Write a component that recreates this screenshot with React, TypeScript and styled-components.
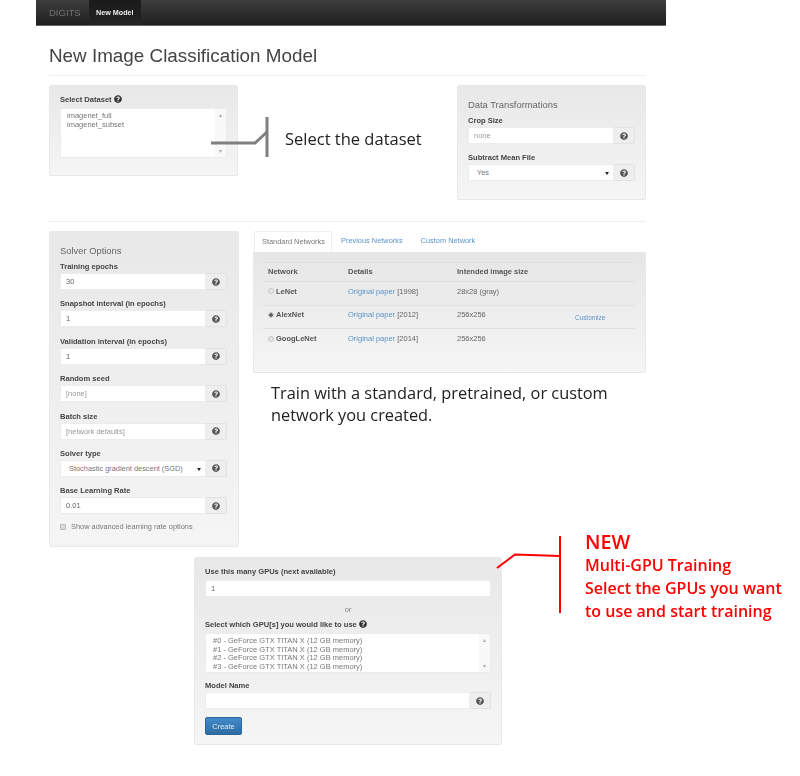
import styled, { createGlobalStyle } from 'styled-components';
import { FaQuestionCircle } from 'react-icons/fa';

const GlobalStyle = createGlobalStyle`
  html, body {
    margin: 0;
    padding: 0;
    background: #fff;
  }
  * {
    box-sizing: border-box;
  }
  body {
    font-family: 'Liberation Sans', Arial, sans-serif;
    font-size: 7.6px;
    color: #555;
  }
`;

const solverFields = [
  { label: 'Training epochs', value: '30' },
  { label: 'Snapshot interval (in epochs)', value: '1' },
  { label: 'Validation interval (in epochs)', value: '1' },
  { label: 'Random seed', placeholder: '[none]' },
  { label: 'Batch size', placeholder: '[network defaults]' },
  { label: 'Solver type', select: 'Stochastic gradient descent (SGD)' },
  { label: 'Base Learning Rate', value: '0.01' },
];

const networks = [
  { name: 'LeNet', year: '[1998]', size: '28x28 (gray)' },
  { name: 'AlexNet', year: '[2012]', size: '256x256', checked: true, customize: true },
  { name: 'GoogLeNet', year: '[2014]', size: '256x256' },
];

const gpus = [0, 1, 2, 3];

type FieldProps = {
  label: string;
  value?: string;
  placeholder?: string;
  select?: string;
};

const Field = ({ label, value, placeholder, select }: FieldProps) => (
  <FieldBox>
    <Label>{label}</Label>
    <InputGroup>
      {select ? (
        <SelectBox>
          {select}
          <Caret />
        </SelectBox>
      ) : (
        <TextInput readOnly defaultValue={value} placeholder={placeholder} />
      )}
      <AddonButton type='button'>
        <FaQuestionCircle />
      </AddonButton>
    </InputGroup>
  </FieldBox>
);

const App = () => {
  return (
    <Page>
      <GlobalStyle />
      <NavBar>
        <Brand>DIGITS</Brand>
        <NavItem>New Model</NavItem>
      </NavBar>
      <Content>
        <PageHeader>
          <h1>New Image Classification Model</h1>
        </PageHeader>

        <TopRow>
          <Well>
            <Label>
              Select Dataset <InlineHelp />
            </Label>
            <ListBox $height={50}>
              <ListText>
                <div>imagenet_full</div>
                <div>imagenet_subset</div>
              </ListText>
              <ScrollTrack>
                <span>▴</span>
                <span>▾</span>
              </ScrollTrack>
            </ListBox>
            <GrayPointer width='60' height='42' viewBox='0 0 60 42'>
              <path d='M0 25 H44 L56 14' />
              <path d='M56 -1 V39' />
            </GrayPointer>
          </Well>
          <DatasetNote>Select the dataset</DatasetNote>
          <Well $tall>
            <WellTitle>Data Transformations</WellTitle>
            <Field label='Crop Size' placeholder='none' />
            <Field label='Subtract Mean File' select='Yes' />
          </Well>
        </TopRow>

        <Divider />

        <MiddleRow>
          <SolverWell>
            <WellTitle>Solver Options</WellTitle>
            {solverFields.map((field) => (
              <Field key={field.label} {...field} />
            ))}
            <CheckRow>
              <CheckBox />
              Show advanced learning rate options
            </CheckRow>
          </SolverWell>

          <NetworkColumn>
            <Tabs>
              <Tab $active>Standard Networks</Tab>
              <Tab>Previous Networks</Tab>
              <Tab>Custom Network</Tab>
            </Tabs>
            <TabPanel>
              <NetworkTable>
                <thead>
                  <tr>
                    <th>Network</th>
                    <th>Details</th>
                    <th>Intended image size</th>
                    <th />
                  </tr>
                </thead>
                <tbody>
                  {networks.map((net) => (
                    <tr key={net.name}>
                      <td>
                        <NetworkName>
                          <Radio $checked={net.checked} />
                          {net.name}
                        </NetworkName>
                      </td>
                      <td>
                        <TextLink>Original paper</TextLink> {net.year}
                      </td>
                      <td>{net.size}</td>
                      <td>{net.customize && <CustomizeLink>Customize</CustomizeLink>}</td>
                    </tr>
                  ))}
                </tbody>
              </NetworkTable>
            </TabPanel>
            <TrainNote>
              Train with a standard, pretrained, or custom
              <br />
              network you created.
            </TrainNote>
          </NetworkColumn>
        </MiddleRow>

        <BottomRow>
          <GpuWell>
            <Label>Use this many GPUs (next available)</Label>
            <GpuInput readOnly defaultValue='1' />
            <OrText>or</OrText>
            <Label>
              Select which GPU[s] you would like to use <InlineHelp />
            </Label>
            <ListBox $height={40}>
              <GpuListText>
                {gpus.map((id) => (
                  <div key={id}>#{id} - GeForce GTX TITAN X (12 GB memory)</div>
                ))}
              </GpuListText>
              <ScrollTrack>
                <span>▴</span>
                <span>▾</span>
              </ScrollTrack>
            </ListBox>
            <ModelNameField>
              <Field label='Model Name' />
            </ModelNameField>
            <CreateButton type='button'>Create</CreateButton>
            <RedPointer width='70' height='80' viewBox='0 0 70 80'>
              <path d='M0 31 L18 17.5 L63 19' />
              <path d='M63 -1 V76' />
            </RedPointer>
          </GpuWell>
          <RedNote>
            <strong>NEW</strong>
            <div>Multi-GPU Training</div>
            <div>Select the GPUs you want</div>
            <div>to use and start training</div>
          </RedNote>
        </BottomRow>
      </Content>
    </Page>
  );
};

export default App;

const Page = styled.div`
  width: 800px;
  height: 776px;
  padding-left: 36px;
  overflow: hidden;
  filter: blur(0.35px);
`;

const NavBar = styled.nav`
  display: flex;
  align-items: stretch;
  width: 630px;
  height: 26px;
  padding-left: 13px;
  background: linear-gradient(to bottom, #3e3e3e 0, #1f1f1f 100%);
  border-bottom: 1px solid #666;
`;

const Brand = styled.span`
  width: 40px;
  line-height: 25px;
  font-size: 9.5px;
  color: #717171;
`;

const NavItem = styled.span`
  padding: 0 7px;
  line-height: 25px;
  font-size: 7.2px;
  font-weight: 700;
  color: #eee;
  background: linear-gradient(to bottom, #1a1a1a 0, #242424 100%);
`;

const Content = styled.main`
  width: 764px;
  padding-left: 13px;
`;

const PageHeader = styled.header`
  width: 597px;
  height: 50px;
  border-bottom: 1px solid #f0f0f0;

  h1 {
    margin: 0;
    padding-top: 20px;
    font-size: 18.85px;
    line-height: 20px;
    font-weight: 400;
    color: #444;
  }
`;

const TopRow = styled.section`
  display: grid;
  grid-template-columns: 189px 1fr 189px;
  align-items: start;
  width: 597px;
  margin-top: 9px;
`;

const Well = styled.div<{ $tall?: boolean }>`
  position: relative;
  height: ${(props) => (props.$tall ? '115px' : '91px')};
  padding: 8px 10px;
  background: linear-gradient(to bottom, #e8e8e8 0, #f5f5f5 100%);
  border: 1px solid #e8e8e8;
  border-radius: 2px;
`;

const WellTitle = styled.div`
  height: 14px;
  margin: 4px 0 3px;
  font-size: 9.4px;
  line-height: 14px;
  color: #666;
`;

const FieldBox = styled.div`
  margin-bottom: 8.4px;
`;

const Label = styled.label`
  display: block;
  height: 12px;
  font-size: 7.55px;
  line-height: 12px;
  font-weight: 700;
  color: #444;
  white-space: nowrap;

  svg {
    font-size: 8px;
    vertical-align: -1px;
    color: #333;
  }
`;

const InlineHelp = styled(FaQuestionCircle)``;

const InputGroup = styled.div`
  display: flex;
  height: 17px;
`;

const TextInput = styled.input`
  flex: 1;
  display: block;
  width: 100%;
  min-width: 0;
  height: 17px;
  padding: 0 5px;
  font-family: inherit;
  font-size: 7.5px;
  color: #666;
  background: #fff;
  border: 1px solid #ececec;
  border-radius: 1px;
  outline: none;

  &::placeholder {
    color: #999;
    opacity: 1;
  }
`;

const GpuInput = styled(TextInput)`
  margin-top: 2px;
`;

const SelectBox = styled.div`
  position: relative;
  flex: 1;
  height: 17px;
  padding-left: 8px;
  font-size: 7.4px;
  line-height: 16px;
  color: #777;
  background: #fff;
  border: 1px solid #ececec;
  white-space: nowrap;
`;

const Caret = styled.span`
  position: absolute;
  top: 7px;
  right: 4px;
  border-style: solid;
  border-width: 3px 2px 0;
  border-color: #222 transparent transparent;
`;

const AddonButton = styled.button`
  flex: 0 0 21px;
  display: flex;
  align-items: center;
  justify-content: center;
  padding: 0;
  background: #eeeeee;
  border: 1px solid #e2e2e2;
  border-left: 0;
  border-radius: 0 2px 2px 0;
  color: #555;
  font-size: 8px;
`;

const ListBox = styled.div<{ $height: number }>`
  display: flex;
  height: ${(props) => props.$height}px;
  margin-top: 2px;
  background: #fff;
  border: 1px solid #ececec;
  border-radius: 1px;
`;

const ListText = styled.div`
  flex: 1;
  padding: 3px 6px;
  font-size: 7.5px;
  line-height: 8.5px;
  color: #777;
`;

const GpuListText = styled(ListText)`
  padding-left: 7px;
`;

const ScrollTrack = styled.div`
  flex: 0 0 11px;
  display: flex;
  flex-direction: column;
  justify-content: space-between;
  padding: 2px 0;
  text-align: center;
  font-size: 6px;
  line-height: 8px;
  color: #aaa;
  background: #f8f8f8;
`;

const GrayPointer = styled.svg`
  position: absolute;
  left: 161px;
  top: 32px;
  overflow: visible;

  path {
    fill: none;
    stroke: #7f7f7f;
    stroke-width: 3px;
  }
`;

const DatasetNote = styled.div`
  padding: 43px 0 0 47px;
  font-family: 'Open Sans', sans-serif;
  font-size: 16.5px;
  line-height: 22px;
  color: #222;
  white-space: nowrap;
`;

const Divider = styled.hr`
  width: 597px;
  height: 1px;
  margin: 21px 0 9px;
  background: #f0f0f0;
  border: 0;
`;

const MiddleRow = styled.section`
  display: flex;
  align-items: flex-start;
  gap: 14px;
  width: 597px;
`;

const SolverWell = styled(Well)`
  flex: 0 0 190px;
  height: 316px;
  padding-right: 11px;
`;

const CheckRow = styled.div`
  display: flex;
  align-items: center;
  gap: 5px;
  margin-top: -2px;
  font-size: 7.4px;
  line-height: 12px;
  color: #777;
  white-space: nowrap;
`;

const CheckBox = styled.span`
  width: 6px;
  height: 6px;
  background: #dcdcdc;
  border: 1px solid #bbb;
  border-radius: 1px;
`;

const NetworkColumn = styled.div`
  flex: 0 0 393px;
`;

const Tabs = styled.div`
  display: flex;
  height: 21px;
  padding-left: 1px;
`;

const Tab = styled.div<{ $active?: boolean }>`
  width: ${(props) => (props.$active ? '78px' : 'auto')};
  padding: 0 ${(props) => (props.$active ? '7px' : '9px')};
  font-size: 7.4px;
  line-height: 20px;
  white-space: nowrap;
  color: ${(props) => (props.$active ? '#777' : '#5c93c7')};
  background: ${(props) => (props.$active ? '#fff' : 'transparent')};
  border: ${(props) => (props.$active ? '1px solid #eee' : '0')};
  border-bottom: 0;
  border-radius: 2px 2px 0 0;
`;

const TabPanel = styled.div`
  height: 121px;
  padding: 9px;
  background: linear-gradient(to bottom, #e6e6e6 0, #f5f5f5 100%);
  border: 1px solid #e8e8e8;
  border-radius: 0 0 2px 2px;
`;

const NetworkTable = styled.table`
  width: 372px;
  border-collapse: collapse;
  table-layout: fixed;
  font-size: 7.5px;
  color: #666;
  border-top: 1px solid #e0e0e0;

  th, td {
    text-align: left;
    vertical-align: middle;
    border-bottom: 1px solid #e0e0e0;
  }

  th {
    height: 19px;
    padding: 0 0 2px 5px;
    font-weight: 700;
    color: #555;
  }

  td {
    height: 23.5px;
    padding: 0 0 4px 5px;
  }

  tbody tr:last-child td {
    border-bottom: 0;
  }

  th:nth-child(1) {
    width: 80px;
  }

  th:nth-child(2) {
    width: 109px;
  }

  th:nth-child(3) {
    width: 118px;
  }
`;

const NetworkName = styled.span`
  display: flex;
  align-items: center;
  gap: 2px;
  font-weight: 700;
  color: #555;
`;

const Radio = styled.span<{ $checked?: boolean }>`
  width: 6px;
  height: 6px;
  border-radius: 50%;
  border: 1px solid #c4c4c4;
  background: ${(props) => (props.$checked ? 'radial-gradient(circle, #555 0 1.5px, #eee 2px)' : '#e8e8e8')};
`;

const TextLink = styled.a`
  color: #5c93c7;
`;

const CustomizeLink = styled.a`
  position: relative;
  top: 3px;
  font-size: 6.4px;
  color: #5c93c7;
`;

const TrainNote = styled.p`
  margin: 9px 0 0 18px;
  font-family: 'Open Sans', sans-serif;
  font-size: 16.35px;
  line-height: 22px;
  color: #222;
  white-space: nowrap;
`;

const BottomRow = styled.section`
  display: flex;
  align-items: flex-start;
  margin: 10px 0 0 145px;
`;

const GpuWell = styled(Well)`
  flex: 0 0 308px;
  height: 188px;
`;

const OrText = styled.div`
  height: 22px;
  padding-top: 7px;
  text-align: center;
  font-size: 7.5px;
  line-height: 12px;
  font-style: italic;
  color: #888;
`;

const ModelNameField = styled.div`
  margin-top: 7px;
`;

const CreateButton = styled.button`
  display: block;
  width: 37px;
  height: 18px;
  padding: 0;
  font-family: inherit;
  font-size: 7.5px;
  color: #dfe9f3;
  background: linear-gradient(to bottom, #428bca 0, #2d6ca2 100%);
  border: 1px solid #2b669a;
  border-radius: 2px;
`;

const RedPointer = styled.svg`
  position: absolute;
  left: 302px;
  top: -21px;
  overflow: visible;

  path {
    fill: none;
    stroke: #f00;
    stroke-width: 2px;
  }
`;

const RedNote = styled.div`
  margin: -28px 0 0 83px;
  font-family: 'Open Sans', sans-serif;
  font-weight: 600;
  font-size: 16px;
  line-height: 23px;
  color: #f00;
  white-space: nowrap;

  strong {
    display: block;
    font-size: 19.8px;
    font-weight: 600;
    line-height: 25px;
  }
`;
